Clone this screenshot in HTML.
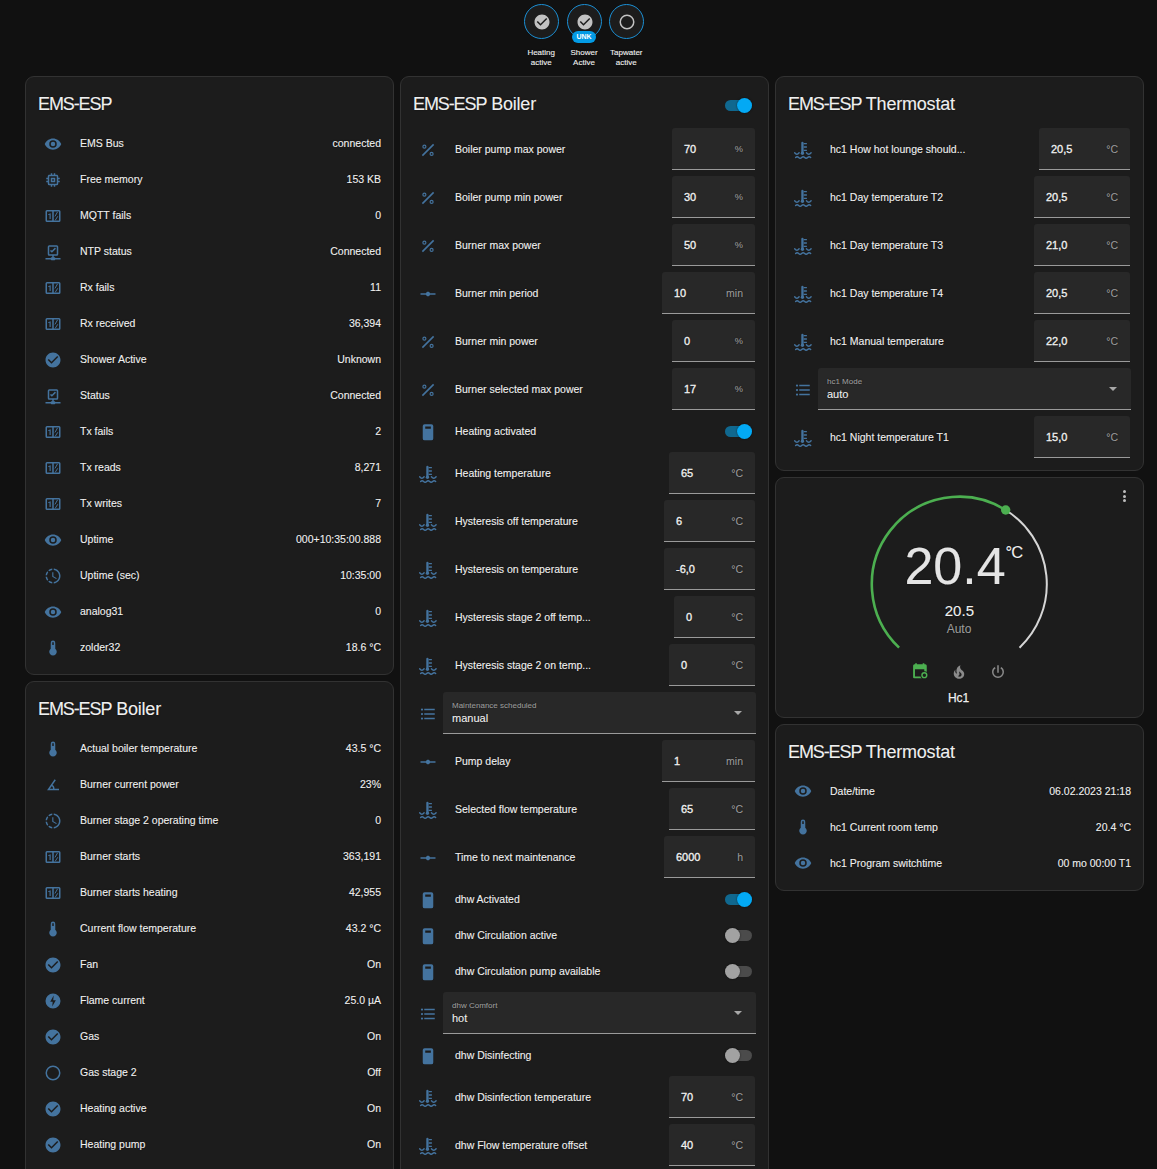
<!DOCTYPE html>
<html><head><meta charset="utf-8"><title>EMS-ESP</title><style>
html,body{margin:0;padding:0;}
body{width:1157px;height:1169px;overflow:hidden;position:relative;background:#111111;font-family:"Liberation Sans",sans-serif;}
.card{position:absolute;box-sizing:border-box;background:#1c1c1c;border:1px solid #323232;border-radius:9px;}
.ic{position:absolute;display:block;}
.t{position:absolute;white-space:nowrap;-webkit-text-stroke:0.12px currentColor;text-shadow:0 0 1.2px rgba(0,0,0,0.9);}
.tf{position:absolute;box-sizing:border-box;background:#282828;border-radius:3px 3px 0 0;border-bottom:1px solid #9a9a9a;}
.trk{position:absolute;width:27px;height:11px;border-radius:6px;}
.knob{position:absolute;width:15px;height:15px;border-radius:50%;box-shadow:0 0 2px rgba(0,0,0,0.6);}
.badge{position:absolute;width:35px;height:35px;box-sizing:border-box;border-radius:50%;border:1.75px solid #1b8fd4;background:#1c1c1c;}
.unk{position:absolute;width:24px;height:12px;border-radius:6px;background:#039be5;color:#fff;font-size:7px;font-weight:bold;line-height:12px;text-align:center;}
.arrow{position:absolute;width:0;height:0;border-left:4px solid transparent;border-right:4px solid transparent;border-top:4px solid #a8a8a8;}
.dot{position:absolute;width:3px;height:3px;border-radius:50%;background:#bdbdbd;}
</style></head><body>
<div class="badge" style="left:523.7px;top:3.9px"></div>
<svg class="ic" style="left:532.7px;top:13.2px;width:18px;height:18px;color:#c2c2c2;fill:#c2c2c2;" viewBox="0 0 24 24"><path d="M12 2C6.5 2 2 6.5 2 12S6.5 22 12 22 22 17.5 22 12 17.5 2 12 2M10 17L5 12L6.41 10.59L10 14.17L17.59 6.58L19 8L10 17Z"/></svg>
<div class="t" style="left:391.20000000000005px;width:300px;top:47.9px;font-size:8px;line-height:10px;color:#f0f0f0;text-align:center;">Heating</div>
<div class="t" style="left:391.20000000000005px;width:300px;top:57.7px;font-size:8px;line-height:10px;color:#f0f0f0;text-align:center;">active</div>
<div class="badge" style="left:566.5px;top:3.9px"></div>
<svg class="ic" style="left:575.5px;top:13.2px;width:18px;height:18px;color:#c2c2c2;fill:#c2c2c2;" viewBox="0 0 24 24"><path d="M12 2C6.5 2 2 6.5 2 12S6.5 22 12 22 22 17.5 22 12 17.5 2 12 2M10 17L5 12L6.41 10.59L10 14.17L17.59 6.58L19 8L10 17Z"/></svg>
<div class="unk" style="left:572px;top:31px">UNK</div>
<div class="t" style="left:434px;width:300px;top:47.9px;font-size:8px;line-height:10px;color:#f0f0f0;text-align:center;">Shower</div>
<div class="t" style="left:434px;width:300px;top:57.7px;font-size:8px;line-height:10px;color:#f0f0f0;text-align:center;">Active</div>
<div class="badge" style="left:608.8px;top:3.9px"></div>
<svg class="ic" style="left:617.8px;top:13.2px;width:18px;height:18px;color:#c2c2c2;fill:#c2c2c2;" viewBox="0 0 24 24"><path d="M12,20A8,8 0 0,1 4,12A8,8 0 0,1 12,4A8,8 0 0,1 20,12A8,8 0 0,1 12,20M12,2A10,10 0 0,0 2,12A10,10 0 0,0 12,22A10,10 0 0,0 22,12A10,10 0 0,0 12,2Z"/></svg>
<div class="t" style="left:476.29999999999995px;width:300px;top:47.9px;font-size:8px;line-height:10px;color:#f0f0f0;text-align:center;">Tapwater</div>
<div class="t" style="left:476.29999999999995px;width:300px;top:57.7px;font-size:8px;line-height:10px;color:#f0f0f0;text-align:center;">active</div>
<div class="card" style="left:25px;top:76px;width:369px;height:599px"></div>
<div class="t" style="left:38px;top:91.6px;font-size:18px;line-height:24px;color:#f0f0f0;"><span style="letter-spacing:-1.1px">EMS-ESP</span></div>
<svg class="ic" style="left:44.0px;top:135.0px;width:18px;height:18px;color:#44739e;fill:#44739e;" viewBox="0 0 24 24"><path d="M12,9A3,3 0 0,0 9,12A3,3 0 0,0 12,15A3,3 0 0,0 15,12A3,3 0 0,0 12,9M12,17A5,5 0 0,1 7,12A5,5 0 0,1 12,7A5,5 0 0,1 17,12A5,5 0 0,1 12,17M12,4.5C7,4.5 2.73,7.61 1,12C2.73,16.39 7,19.5 12,19.5C17,19.5 21.27,16.39 23,12C21.27,7.61 17,4.5 12,4.5Z"/></svg>
<div class="t" style="left:80px;top:133.0px;font-size:10.5px;line-height:20px;color:#f0f0f0;">EMS Bus</div>
<div class="t" style="right:776px;top:133.0px;font-size:10.5px;line-height:20px;color:#f0f0f0;text-align:right;">connected</div>
<svg class="ic" style="left:44.0px;top:171.0px;width:18px;height:18px;color:#44739e;fill:#44739e;" viewBox="0 0 24 24"><path d="M17,17H7V7H17M21,11V9H19V7C19,5.89 18.1,5 17,5H15V3H13V5H11V3H9V5H7C5.89,5 5,5.89 5,7V9H3V11H5V13H3V15H5V17A2,2 0 0,0 7,19H9V21H11V19H13V21H15V19H17A2,2 0 0,0 19,17V15H21V13H19V11M13,13H11V11H13M15,9H9V15H15V9Z"/></svg>
<div class="t" style="left:80px;top:169.0px;font-size:10.5px;line-height:20px;color:#f0f0f0;">Free memory</div>
<div class="t" style="right:776px;top:169.0px;font-size:10.5px;line-height:20px;color:#f0f0f0;text-align:right;">153 KB</div>
<svg class="ic" style="left:44.0px;top:207.0px;width:18px;height:18px;color:#44739e;fill:#44739e;" viewBox="0 0 24 24"><path fill-rule="evenodd" d="M4,4H20A2,2 0 0 1 22,6V18A2,2 0 0 1 20,20H4A2,2 0 0 1 2,18V6A2,2 0 0 1 4,4ZM4,6V18H11V6ZM13,6V18H20V6Z"/><path d="M8.9,16H7.4V10.2L5.6,10.8V9.5L8.8,8.4H8.9Z"/><path d="M14.6,12.6L18,6.6M14.9,17.8L18.3,12.4" fill="none" stroke="currentColor" stroke-width="1.3"/></svg>
<div class="t" style="left:80px;top:205.0px;font-size:10.5px;line-height:20px;color:#f0f0f0;">MQTT fails</div>
<div class="t" style="right:776px;top:205.0px;font-size:10.5px;line-height:20px;color:#f0f0f0;text-align:right;">0</div>
<svg class="ic" style="left:44.0px;top:243.0px;width:18px;height:18px;color:#44739e;fill:#44739e;" viewBox="0 0 24 24"><path d="M15,20A1,1 0 0,0 14,19H13V17H17A2,2 0 0,0 19,15V5A2,2 0 0,0 17,3H7A2,2 0 0,0 5,5V15A2,2 0 0,0 7,17H11V19H10A1,1 0 0,0 9,20H2V22H9A1,1 0 0,0 10,23H14A1,1 0 0,0 15,22H22V20H15M7,15V5H17V15H7M10.5,13L8,10.5L9.41,9.09L10.5,10.17L14.59,6.09L16,7.5L10.5,13Z"/></svg>
<div class="t" style="left:80px;top:241.0px;font-size:10.5px;line-height:20px;color:#f0f0f0;">NTP status</div>
<div class="t" style="right:776px;top:241.0px;font-size:10.5px;line-height:20px;color:#f0f0f0;text-align:right;">Connected</div>
<svg class="ic" style="left:44.0px;top:279.0px;width:18px;height:18px;color:#44739e;fill:#44739e;" viewBox="0 0 24 24"><path fill-rule="evenodd" d="M4,4H20A2,2 0 0 1 22,6V18A2,2 0 0 1 20,20H4A2,2 0 0 1 2,18V6A2,2 0 0 1 4,4ZM4,6V18H11V6ZM13,6V18H20V6Z"/><path d="M8.9,16H7.4V10.2L5.6,10.8V9.5L8.8,8.4H8.9Z"/><path d="M14.6,12.6L18,6.6M14.9,17.8L18.3,12.4" fill="none" stroke="currentColor" stroke-width="1.3"/></svg>
<div class="t" style="left:80px;top:277.0px;font-size:10.5px;line-height:20px;color:#f0f0f0;">Rx fails</div>
<div class="t" style="right:776px;top:277.0px;font-size:10.5px;line-height:20px;color:#f0f0f0;text-align:right;">11</div>
<svg class="ic" style="left:44.0px;top:315.0px;width:18px;height:18px;color:#44739e;fill:#44739e;" viewBox="0 0 24 24"><path fill-rule="evenodd" d="M4,4H20A2,2 0 0 1 22,6V18A2,2 0 0 1 20,20H4A2,2 0 0 1 2,18V6A2,2 0 0 1 4,4ZM4,6V18H11V6ZM13,6V18H20V6Z"/><path d="M8.9,16H7.4V10.2L5.6,10.8V9.5L8.8,8.4H8.9Z"/><path d="M14.6,12.6L18,6.6M14.9,17.8L18.3,12.4" fill="none" stroke="currentColor" stroke-width="1.3"/></svg>
<div class="t" style="left:80px;top:313.0px;font-size:10.5px;line-height:20px;color:#f0f0f0;">Rx received</div>
<div class="t" style="right:776px;top:313.0px;font-size:10.5px;line-height:20px;color:#f0f0f0;text-align:right;">36,394</div>
<svg class="ic" style="left:44.0px;top:351.0px;width:18px;height:18px;color:#44739e;fill:#44739e;" viewBox="0 0 24 24"><path d="M12 2C6.5 2 2 6.5 2 12S6.5 22 12 22 22 17.5 22 12 17.5 2 12 2M10 17L5 12L6.41 10.59L10 14.17L17.59 6.58L19 8L10 17Z"/></svg>
<div class="t" style="left:80px;top:349.0px;font-size:10.5px;line-height:20px;color:#f0f0f0;">Shower Active</div>
<div class="t" style="right:776px;top:349.0px;font-size:10.5px;line-height:20px;color:#f0f0f0;text-align:right;">Unknown</div>
<svg class="ic" style="left:44.0px;top:387.0px;width:18px;height:18px;color:#44739e;fill:#44739e;" viewBox="0 0 24 24"><path d="M15,20A1,1 0 0,0 14,19H13V17H17A2,2 0 0,0 19,15V5A2,2 0 0,0 17,3H7A2,2 0 0,0 5,5V15A2,2 0 0,0 7,17H11V19H10A1,1 0 0,0 9,20H2V22H9A1,1 0 0,0 10,23H14A1,1 0 0,0 15,22H22V20H15M7,15V5H17V15H7M10.5,13L8,10.5L9.41,9.09L10.5,10.17L14.59,6.09L16,7.5L10.5,13Z"/></svg>
<div class="t" style="left:80px;top:385.0px;font-size:10.5px;line-height:20px;color:#f0f0f0;">Status</div>
<div class="t" style="right:776px;top:385.0px;font-size:10.5px;line-height:20px;color:#f0f0f0;text-align:right;">Connected</div>
<svg class="ic" style="left:44.0px;top:423.0px;width:18px;height:18px;color:#44739e;fill:#44739e;" viewBox="0 0 24 24"><path fill-rule="evenodd" d="M4,4H20A2,2 0 0 1 22,6V18A2,2 0 0 1 20,20H4A2,2 0 0 1 2,18V6A2,2 0 0 1 4,4ZM4,6V18H11V6ZM13,6V18H20V6Z"/><path d="M8.9,16H7.4V10.2L5.6,10.8V9.5L8.8,8.4H8.9Z"/><path d="M14.6,12.6L18,6.6M14.9,17.8L18.3,12.4" fill="none" stroke="currentColor" stroke-width="1.3"/></svg>
<div class="t" style="left:80px;top:421.0px;font-size:10.5px;line-height:20px;color:#f0f0f0;">Tx fails</div>
<div class="t" style="right:776px;top:421.0px;font-size:10.5px;line-height:20px;color:#f0f0f0;text-align:right;">2</div>
<svg class="ic" style="left:44.0px;top:459.0px;width:18px;height:18px;color:#44739e;fill:#44739e;" viewBox="0 0 24 24"><path fill-rule="evenodd" d="M4,4H20A2,2 0 0 1 22,6V18A2,2 0 0 1 20,20H4A2,2 0 0 1 2,18V6A2,2 0 0 1 4,4ZM4,6V18H11V6ZM13,6V18H20V6Z"/><path d="M8.9,16H7.4V10.2L5.6,10.8V9.5L8.8,8.4H8.9Z"/><path d="M14.6,12.6L18,6.6M14.9,17.8L18.3,12.4" fill="none" stroke="currentColor" stroke-width="1.3"/></svg>
<div class="t" style="left:80px;top:457.0px;font-size:10.5px;line-height:20px;color:#f0f0f0;">Tx reads</div>
<div class="t" style="right:776px;top:457.0px;font-size:10.5px;line-height:20px;color:#f0f0f0;text-align:right;">8,271</div>
<svg class="ic" style="left:44.0px;top:495.0px;width:18px;height:18px;color:#44739e;fill:#44739e;" viewBox="0 0 24 24"><path fill-rule="evenodd" d="M4,4H20A2,2 0 0 1 22,6V18A2,2 0 0 1 20,20H4A2,2 0 0 1 2,18V6A2,2 0 0 1 4,4ZM4,6V18H11V6ZM13,6V18H20V6Z"/><path d="M8.9,16H7.4V10.2L5.6,10.8V9.5L8.8,8.4H8.9Z"/><path d="M14.6,12.6L18,6.6M14.9,17.8L18.3,12.4" fill="none" stroke="currentColor" stroke-width="1.3"/></svg>
<div class="t" style="left:80px;top:493.0px;font-size:10.5px;line-height:20px;color:#f0f0f0;">Tx writes</div>
<div class="t" style="right:776px;top:493.0px;font-size:10.5px;line-height:20px;color:#f0f0f0;text-align:right;">7</div>
<svg class="ic" style="left:44.0px;top:531.0px;width:18px;height:18px;color:#44739e;fill:#44739e;" viewBox="0 0 24 24"><path d="M12,9A3,3 0 0,0 9,12A3,3 0 0,0 12,15A3,3 0 0,0 15,12A3,3 0 0,0 12,9M12,17A5,5 0 0,1 7,12A5,5 0 0,1 12,7A5,5 0 0,1 17,12A5,5 0 0,1 12,17M12,4.5C7,4.5 2.73,7.61 1,12C2.73,16.39 7,19.5 12,19.5C17,19.5 21.27,16.39 23,12C21.27,7.61 17,4.5 12,4.5Z"/></svg>
<div class="t" style="left:80px;top:529.0px;font-size:10.5px;line-height:20px;color:#f0f0f0;">Uptime</div>
<div class="t" style="right:776px;top:529.0px;font-size:10.5px;line-height:20px;color:#f0f0f0;text-align:right;">000+10:35:00.888</div>
<svg class="ic" style="left:44.0px;top:567.0px;width:18px;height:18px;color:#44739e;fill:#44739e;" viewBox="0 0 24 24"><path d="M13,2.03V2.05L13,4.05C17.39,4.59 20.5,8.58 19.96,12.97C19.5,16.61 16.64,19.5 13,19.93V21.93C18.5,21.38 22.5,16.5 21.95,11C21.5,6.25 17.73,2.5 13,2.03M11,2.06C9.05,2.25 7.19,3 5.67,4.26L7.1,5.74C8.22,4.84 9.57,4.26 11,4.06V2.06M4.26,5.67C3,7.19 2.25,9.04 2.05,11H4.05C4.24,9.58 4.8,8.23 5.69,7.1L4.26,5.67M2.06,13C2.26,14.96 3.03,16.81 4.27,18.33L5.69,16.9C4.81,15.77 4.24,14.42 4.06,13H2.06M7.1,18.37L5.67,19.74C7.18,21 9.04,21.79 11,22V20C9.58,19.82 8.23,19.25 7.1,18.37M12.5,7V12.25L17,14.92L16.25,16.15L11,13V7H12.5Z"/></svg>
<div class="t" style="left:80px;top:565.0px;font-size:10.5px;line-height:20px;color:#f0f0f0;">Uptime (sec)</div>
<div class="t" style="right:776px;top:565.0px;font-size:10.5px;line-height:20px;color:#f0f0f0;text-align:right;">10:35:00</div>
<svg class="ic" style="left:44.0px;top:603.0px;width:18px;height:18px;color:#44739e;fill:#44739e;" viewBox="0 0 24 24"><path d="M12,9A3,3 0 0,0 9,12A3,3 0 0,0 12,15A3,3 0 0,0 15,12A3,3 0 0,0 12,9M12,17A5,5 0 0,1 7,12A5,5 0 0,1 12,7A5,5 0 0,1 17,12A5,5 0 0,1 12,17M12,4.5C7,4.5 2.73,7.61 1,12C2.73,16.39 7,19.5 12,19.5C17,19.5 21.27,16.39 23,12C21.27,7.61 17,4.5 12,4.5Z"/></svg>
<div class="t" style="left:80px;top:601.0px;font-size:10.5px;line-height:20px;color:#f0f0f0;">analog31</div>
<div class="t" style="right:776px;top:601.0px;font-size:10.5px;line-height:20px;color:#f0f0f0;text-align:right;">0</div>
<svg class="ic" style="left:44.0px;top:639.0px;width:18px;height:18px;color:#44739e;fill:#44739e;" viewBox="0 0 24 24"><path fill-rule="evenodd" d="M15 13V5A3 3 0 0 0 9 5V13A5 5 0 1 0 15 13M12 4A1 1 0 0 1 13 5V8H11V5A1 1 0 0 1 12 4Z"/></svg>
<div class="t" style="left:80px;top:637.0px;font-size:10.5px;line-height:20px;color:#f0f0f0;">zolder32</div>
<div class="t" style="right:776px;top:637.0px;font-size:10.5px;line-height:20px;color:#f0f0f0;text-align:right;">18.6 °C</div>
<div class="card" style="left:25px;top:681px;width:369px;height:600px"></div>
<div class="t" style="left:38px;top:697.2px;font-size:18px;line-height:24px;color:#f0f0f0;"><span style="letter-spacing:-1.1px">EMS-ESP</span><span style="letter-spacing:-0.2px"> Boiler</span></div>
<svg class="ic" style="left:44.0px;top:740.0px;width:18px;height:18px;color:#44739e;fill:#44739e;" viewBox="0 0 24 24"><path fill-rule="evenodd" d="M15 13V5A3 3 0 0 0 9 5V13A5 5 0 1 0 15 13M12 4A1 1 0 0 1 13 5V8H11V5A1 1 0 0 1 12 4Z"/></svg>
<div class="t" style="left:80px;top:738.0px;font-size:10.5px;line-height:20px;color:#f0f0f0;">Actual boiler temperature</div>
<div class="t" style="right:776px;top:738.0px;font-size:10.5px;line-height:20px;color:#f0f0f0;text-align:right;">43.5 °C</div>
<svg class="ic" style="left:44.0px;top:776.0px;width:18px;height:18px;color:#44739e;fill:#44739e;" viewBox="0 0 24 24"><path d="M20,19H4.09L14.18,4.43L15.82,5.57L11.28,12.13C12.89,12.96 14,14.62 14,16.54C14,16.7 14,16.85 13.97,17H20V19M7.91,17H11.96C12,16.85 12,16.7 12,16.54C12,15.28 11.24,14.22 10.14,13.78L7.91,17Z"/></svg>
<div class="t" style="left:80px;top:774.0px;font-size:10.5px;line-height:20px;color:#f0f0f0;">Burner current power</div>
<div class="t" style="right:776px;top:774.0px;font-size:10.5px;line-height:20px;color:#f0f0f0;text-align:right;">23%</div>
<svg class="ic" style="left:44.0px;top:812.0px;width:18px;height:18px;color:#44739e;fill:#44739e;" viewBox="0 0 24 24"><path d="M13,2.03V2.05L13,4.05C17.39,4.59 20.5,8.58 19.96,12.97C19.5,16.61 16.64,19.5 13,19.93V21.93C18.5,21.38 22.5,16.5 21.95,11C21.5,6.25 17.73,2.5 13,2.03M11,2.06C9.05,2.25 7.19,3 5.67,4.26L7.1,5.74C8.22,4.84 9.57,4.26 11,4.06V2.06M4.26,5.67C3,7.19 2.25,9.04 2.05,11H4.05C4.24,9.58 4.8,8.23 5.69,7.1L4.26,5.67M2.06,13C2.26,14.96 3.03,16.81 4.27,18.33L5.69,16.9C4.81,15.77 4.24,14.42 4.06,13H2.06M7.1,18.37L5.67,19.74C7.18,21 9.04,21.79 11,22V20C9.58,19.82 8.23,19.25 7.1,18.37M12.5,7V12.25L17,14.92L16.25,16.15L11,13V7H12.5Z"/></svg>
<div class="t" style="left:80px;top:810.0px;font-size:10.5px;line-height:20px;color:#f0f0f0;">Burner stage 2 operating time</div>
<div class="t" style="right:776px;top:810.0px;font-size:10.5px;line-height:20px;color:#f0f0f0;text-align:right;">0</div>
<svg class="ic" style="left:44.0px;top:848.0px;width:18px;height:18px;color:#44739e;fill:#44739e;" viewBox="0 0 24 24"><path fill-rule="evenodd" d="M4,4H20A2,2 0 0 1 22,6V18A2,2 0 0 1 20,20H4A2,2 0 0 1 2,18V6A2,2 0 0 1 4,4ZM4,6V18H11V6ZM13,6V18H20V6Z"/><path d="M8.9,16H7.4V10.2L5.6,10.8V9.5L8.8,8.4H8.9Z"/><path d="M14.6,12.6L18,6.6M14.9,17.8L18.3,12.4" fill="none" stroke="currentColor" stroke-width="1.3"/></svg>
<div class="t" style="left:80px;top:846.0px;font-size:10.5px;line-height:20px;color:#f0f0f0;">Burner starts</div>
<div class="t" style="right:776px;top:846.0px;font-size:10.5px;line-height:20px;color:#f0f0f0;text-align:right;">363,191</div>
<svg class="ic" style="left:44.0px;top:884.0px;width:18px;height:18px;color:#44739e;fill:#44739e;" viewBox="0 0 24 24"><path fill-rule="evenodd" d="M4,4H20A2,2 0 0 1 22,6V18A2,2 0 0 1 20,20H4A2,2 0 0 1 2,18V6A2,2 0 0 1 4,4ZM4,6V18H11V6ZM13,6V18H20V6Z"/><path d="M8.9,16H7.4V10.2L5.6,10.8V9.5L8.8,8.4H8.9Z"/><path d="M14.6,12.6L18,6.6M14.9,17.8L18.3,12.4" fill="none" stroke="currentColor" stroke-width="1.3"/></svg>
<div class="t" style="left:80px;top:882.0px;font-size:10.5px;line-height:20px;color:#f0f0f0;">Burner starts heating</div>
<div class="t" style="right:776px;top:882.0px;font-size:10.5px;line-height:20px;color:#f0f0f0;text-align:right;">42,955</div>
<svg class="ic" style="left:44.0px;top:920.0px;width:18px;height:18px;color:#44739e;fill:#44739e;" viewBox="0 0 24 24"><path fill-rule="evenodd" d="M15 13V5A3 3 0 0 0 9 5V13A5 5 0 1 0 15 13M12 4A1 1 0 0 1 13 5V8H11V5A1 1 0 0 1 12 4Z"/></svg>
<div class="t" style="left:80px;top:918.0px;font-size:10.5px;line-height:20px;color:#f0f0f0;">Current flow temperature</div>
<div class="t" style="right:776px;top:918.0px;font-size:10.5px;line-height:20px;color:#f0f0f0;text-align:right;">43.2 °C</div>
<svg class="ic" style="left:44.0px;top:956.0px;width:18px;height:18px;color:#44739e;fill:#44739e;" viewBox="0 0 24 24"><path d="M12 2C6.5 2 2 6.5 2 12S6.5 22 12 22 22 17.5 22 12 17.5 2 12 2M10 17L5 12L6.41 10.59L10 14.17L17.59 6.58L19 8L10 17Z"/></svg>
<div class="t" style="left:80px;top:954.0px;font-size:10.5px;line-height:20px;color:#f0f0f0;">Fan</div>
<div class="t" style="right:776px;top:954.0px;font-size:10.5px;line-height:20px;color:#f0f0f0;text-align:right;">On</div>
<svg class="ic" style="left:44.0px;top:992.0px;width:18px;height:18px;color:#44739e;fill:#44739e;" viewBox="0 0 24 24"><path fill-rule="evenodd" d="M12,2A10,10 0 0 0 2,12A10,10 0 0 0 12,22A10,10 0 0 0 22,12A10,10 0 0 0 12,2ZM12.9,4.6L8.3,12.9H11.6L11,19.4L15.8,11H12.3Z"/></svg>
<div class="t" style="left:80px;top:990.0px;font-size:10.5px;line-height:20px;color:#f0f0f0;">Flame current</div>
<div class="t" style="right:776px;top:990.0px;font-size:10.5px;line-height:20px;color:#f0f0f0;text-align:right;">25.0 µA</div>
<svg class="ic" style="left:44.0px;top:1028.0px;width:18px;height:18px;color:#44739e;fill:#44739e;" viewBox="0 0 24 24"><path d="M12 2C6.5 2 2 6.5 2 12S6.5 22 12 22 22 17.5 22 12 17.5 2 12 2M10 17L5 12L6.41 10.59L10 14.17L17.59 6.58L19 8L10 17Z"/></svg>
<div class="t" style="left:80px;top:1026.0px;font-size:10.5px;line-height:20px;color:#f0f0f0;">Gas</div>
<div class="t" style="right:776px;top:1026.0px;font-size:10.5px;line-height:20px;color:#f0f0f0;text-align:right;">On</div>
<svg class="ic" style="left:44.0px;top:1064.0px;width:18px;height:18px;color:#44739e;fill:#44739e;" viewBox="0 0 24 24"><path d="M12,20A8,8 0 0,1 4,12A8,8 0 0,1 12,4A8,8 0 0,1 20,12A8,8 0 0,1 12,20M12,2A10,10 0 0,0 2,12A10,10 0 0,0 12,22A10,10 0 0,0 22,12A10,10 0 0,0 12,2Z"/></svg>
<div class="t" style="left:80px;top:1062.0px;font-size:10.5px;line-height:20px;color:#f0f0f0;">Gas stage 2</div>
<div class="t" style="right:776px;top:1062.0px;font-size:10.5px;line-height:20px;color:#f0f0f0;text-align:right;">Off</div>
<svg class="ic" style="left:44.0px;top:1100.0px;width:18px;height:18px;color:#44739e;fill:#44739e;" viewBox="0 0 24 24"><path d="M12 2C6.5 2 2 6.5 2 12S6.5 22 12 22 22 17.5 22 12 17.5 2 12 2M10 17L5 12L6.41 10.59L10 14.17L17.59 6.58L19 8L10 17Z"/></svg>
<div class="t" style="left:80px;top:1098.0px;font-size:10.5px;line-height:20px;color:#f0f0f0;">Heating active</div>
<div class="t" style="right:776px;top:1098.0px;font-size:10.5px;line-height:20px;color:#f0f0f0;text-align:right;">On</div>
<svg class="ic" style="left:44.0px;top:1136.0px;width:18px;height:18px;color:#44739e;fill:#44739e;" viewBox="0 0 24 24"><path d="M12 2C6.5 2 2 6.5 2 12S6.5 22 12 22 22 17.5 22 12 17.5 2 12 2M10 17L5 12L6.41 10.59L10 14.17L17.59 6.58L19 8L10 17Z"/></svg>
<div class="t" style="left:80px;top:1134.0px;font-size:10.5px;line-height:20px;color:#f0f0f0;">Heating pump</div>
<div class="t" style="right:776px;top:1134.0px;font-size:10.5px;line-height:20px;color:#f0f0f0;text-align:right;">On</div>
<div class="card" style="left:400px;top:76px;width:369px;height:1200px"></div>
<div class="t" style="left:413px;top:91.6px;font-size:18px;line-height:24px;color:#f0f0f0;"><span style="letter-spacing:-1.1px">EMS-ESP</span><span style="letter-spacing:-0.2px"> Boiler</span></div>
<div class="trk" style="left:725px;top:99.8px;background:#10688f"></div><div class="knob" style="left:737px;top:97.8px;background:#03a9f4"></div>
<svg class="ic" style="left:419.0px;top:140.8px;width:18px;height:18px;color:#44739e;fill:#44739e;" viewBox="0 0 24 24"><g fill="none" stroke="currentColor"><path d="M4.5,19.5L19.5,4.5" stroke-width="2.1"/><circle cx="7.2" cy="7.6" r="2" stroke-width="1.6"/><circle cx="16.8" cy="17.2" r="2" stroke-width="1.6"/></g></svg>
<div class="t" style="left:455px;top:138.8px;font-size:10.5px;line-height:20px;color:#f0f0f0;">Boiler pump max power</div>
<div class="tf" style="left:672px;top:128px;width:83px;height:42px"></div>
<div class="t" style="left:684px;top:139.0px;font-size:11px;line-height:20px;color:#f0f0f0;-webkit-text-stroke:0.35px currentColor;">70</div>
<div class="t" style="right:414px;top:139.0px;font-size:9.2px;line-height:20px;color:#9b9b9b;text-align:right;">%</div>
<svg class="ic" style="left:419.0px;top:188.8px;width:18px;height:18px;color:#44739e;fill:#44739e;" viewBox="0 0 24 24"><g fill="none" stroke="currentColor"><path d="M4.5,19.5L19.5,4.5" stroke-width="2.1"/><circle cx="7.2" cy="7.6" r="2" stroke-width="1.6"/><circle cx="16.8" cy="17.2" r="2" stroke-width="1.6"/></g></svg>
<div class="t" style="left:455px;top:186.8px;font-size:10.5px;line-height:20px;color:#f0f0f0;">Boiler pump min power</div>
<div class="tf" style="left:672px;top:176px;width:83px;height:42px"></div>
<div class="t" style="left:684px;top:187.0px;font-size:11px;line-height:20px;color:#f0f0f0;-webkit-text-stroke:0.35px currentColor;">30</div>
<div class="t" style="right:414px;top:187.0px;font-size:9.2px;line-height:20px;color:#9b9b9b;text-align:right;">%</div>
<svg class="ic" style="left:419.0px;top:236.8px;width:18px;height:18px;color:#44739e;fill:#44739e;" viewBox="0 0 24 24"><g fill="none" stroke="currentColor"><path d="M4.5,19.5L19.5,4.5" stroke-width="2.1"/><circle cx="7.2" cy="7.6" r="2" stroke-width="1.6"/><circle cx="16.8" cy="17.2" r="2" stroke-width="1.6"/></g></svg>
<div class="t" style="left:455px;top:234.8px;font-size:10.5px;line-height:20px;color:#f0f0f0;">Burner max power</div>
<div class="tf" style="left:672px;top:224px;width:83px;height:42px"></div>
<div class="t" style="left:684px;top:235.0px;font-size:11px;line-height:20px;color:#f0f0f0;-webkit-text-stroke:0.35px currentColor;">50</div>
<div class="t" style="right:414px;top:235.0px;font-size:9.2px;line-height:20px;color:#9b9b9b;text-align:right;">%</div>
<svg class="ic" style="left:419.0px;top:284.8px;width:18px;height:18px;color:#44739e;fill:#44739e;" viewBox="0 0 24 24"><path d="M2 11H9.17C9.58 9.83 10.69 9 12 9S14.42 9.83 14.83 11H22V13H14.83C14.42 14.17 13.31 15 12 15S9.58 14.17 9.17 13H2V11Z"/></svg>
<div class="t" style="left:455px;top:282.8px;font-size:10.5px;line-height:20px;color:#f0f0f0;">Burner min period</div>
<div class="tf" style="left:662px;top:272px;width:93px;height:42px"></div>
<div class="t" style="left:674px;top:283.0px;font-size:11px;line-height:20px;color:#f0f0f0;-webkit-text-stroke:0.35px currentColor;">10</div>
<div class="t" style="right:414px;top:283.0px;font-size:10.5px;line-height:20px;color:#9b9b9b;text-align:right;">min</div>
<svg class="ic" style="left:419.0px;top:332.8px;width:18px;height:18px;color:#44739e;fill:#44739e;" viewBox="0 0 24 24"><g fill="none" stroke="currentColor"><path d="M4.5,19.5L19.5,4.5" stroke-width="2.1"/><circle cx="7.2" cy="7.6" r="2" stroke-width="1.6"/><circle cx="16.8" cy="17.2" r="2" stroke-width="1.6"/></g></svg>
<div class="t" style="left:455px;top:330.8px;font-size:10.5px;line-height:20px;color:#f0f0f0;">Burner min power</div>
<div class="tf" style="left:672px;top:320px;width:83px;height:42px"></div>
<div class="t" style="left:684px;top:331.0px;font-size:11px;line-height:20px;color:#f0f0f0;-webkit-text-stroke:0.35px currentColor;">0</div>
<div class="t" style="right:414px;top:331.0px;font-size:9.2px;line-height:20px;color:#9b9b9b;text-align:right;">%</div>
<svg class="ic" style="left:419.0px;top:380.8px;width:18px;height:18px;color:#44739e;fill:#44739e;" viewBox="0 0 24 24"><g fill="none" stroke="currentColor"><path d="M4.5,19.5L19.5,4.5" stroke-width="2.1"/><circle cx="7.2" cy="7.6" r="2" stroke-width="1.6"/><circle cx="16.8" cy="17.2" r="2" stroke-width="1.6"/></g></svg>
<div class="t" style="left:455px;top:378.8px;font-size:10.5px;line-height:20px;color:#f0f0f0;">Burner selected max power</div>
<div class="tf" style="left:672px;top:368px;width:83px;height:42px"></div>
<div class="t" style="left:684px;top:379.0px;font-size:11px;line-height:20px;color:#f0f0f0;-webkit-text-stroke:0.35px currentColor;">17</div>
<div class="t" style="right:414px;top:379.0px;font-size:9.2px;line-height:20px;color:#9b9b9b;text-align:right;">%</div>
<svg class="ic" style="left:419.0px;top:422.8px;width:18px;height:18px;color:#44739e;fill:#44739e;" viewBox="0 0 24 24"><path fill-rule="evenodd" d="M7.5,1.5H16.5A2.5,2.5 0 0 1 19,4V20.5A2.5,2.5 0 0 1 16.5,23H7.5A2.5,2.5 0 0 1 5,20.5V4A2.5,2.5 0 0 1 7.5,1.5ZM8.3,4.5V7.5H15.8V4.5Z"/></svg>
<div class="t" style="left:455px;top:420.8px;font-size:10.5px;line-height:20px;color:#f0f0f0;">Heating activated</div>
<div class="trk" style="left:725px;top:425.8px;background:#10688f"></div><div class="knob" style="left:737px;top:423.8px;background:#03a9f4"></div>
<svg class="ic" style="left:419.0px;top:464.8px;width:18px;height:18px;color:#44739e;fill:#44739e;" viewBox="0 0 24 24"><g fill="none" stroke="currentColor" stroke-linecap="round"><path d="M11.25,2.7V15.5" stroke-width="3.1"/><path d="M12.8,3.5H17.2M12.8,8H17.2M12.8,12.6H17.2" stroke-width="1.7" stroke-linecap="butt"/><path d="M0.9,15.7Q3.8,19.6 6.8,15.7M16.6,15.7Q19.6,19.6 22.8,15.7" stroke-width="1.9"/><path d="M2.2,22Q4.2,20 6.2,22T10.2,22T14.2,22T18.2,22T22.2,22" stroke-width="1.9"/></g><circle cx="11.25" cy="16.3" r="2.2"/></svg>
<div class="t" style="left:455px;top:462.8px;font-size:10.5px;line-height:20px;color:#f0f0f0;">Heating temperature</div>
<div class="tf" style="left:669px;top:452px;width:86px;height:42px"></div>
<div class="t" style="left:681px;top:463.0px;font-size:11px;line-height:20px;color:#f0f0f0;-webkit-text-stroke:0.35px currentColor;">65</div>
<div class="t" style="right:414px;top:463.0px;font-size:10.5px;line-height:20px;color:#9b9b9b;text-align:right;">°C</div>
<svg class="ic" style="left:419.0px;top:512.8px;width:18px;height:18px;color:#44739e;fill:#44739e;" viewBox="0 0 24 24"><g fill="none" stroke="currentColor" stroke-linecap="round"><path d="M11.25,2.7V15.5" stroke-width="3.1"/><path d="M12.8,3.5H17.2M12.8,8H17.2M12.8,12.6H17.2" stroke-width="1.7" stroke-linecap="butt"/><path d="M0.9,15.7Q3.8,19.6 6.8,15.7M16.6,15.7Q19.6,19.6 22.8,15.7" stroke-width="1.9"/><path d="M2.2,22Q4.2,20 6.2,22T10.2,22T14.2,22T18.2,22T22.2,22" stroke-width="1.9"/></g><circle cx="11.25" cy="16.3" r="2.2"/></svg>
<div class="t" style="left:455px;top:510.79999999999995px;font-size:10.5px;line-height:20px;color:#f0f0f0;">Hysteresis off temperature</div>
<div class="tf" style="left:664px;top:500px;width:91px;height:42px"></div>
<div class="t" style="left:676px;top:511.0px;font-size:11px;line-height:20px;color:#f0f0f0;-webkit-text-stroke:0.35px currentColor;">6</div>
<div class="t" style="right:414px;top:511.0px;font-size:10.5px;line-height:20px;color:#9b9b9b;text-align:right;">°C</div>
<svg class="ic" style="left:419.0px;top:560.8px;width:18px;height:18px;color:#44739e;fill:#44739e;" viewBox="0 0 24 24"><g fill="none" stroke="currentColor" stroke-linecap="round"><path d="M11.25,2.7V15.5" stroke-width="3.1"/><path d="M12.8,3.5H17.2M12.8,8H17.2M12.8,12.6H17.2" stroke-width="1.7" stroke-linecap="butt"/><path d="M0.9,15.7Q3.8,19.6 6.8,15.7M16.6,15.7Q19.6,19.6 22.8,15.7" stroke-width="1.9"/><path d="M2.2,22Q4.2,20 6.2,22T10.2,22T14.2,22T18.2,22T22.2,22" stroke-width="1.9"/></g><circle cx="11.25" cy="16.3" r="2.2"/></svg>
<div class="t" style="left:455px;top:558.8px;font-size:10.5px;line-height:20px;color:#f0f0f0;">Hysteresis on temperature</div>
<div class="tf" style="left:664px;top:548px;width:91px;height:42px"></div>
<div class="t" style="left:676px;top:559.0px;font-size:11px;line-height:20px;color:#f0f0f0;-webkit-text-stroke:0.35px currentColor;">-6,0</div>
<div class="t" style="right:414px;top:559.0px;font-size:10.5px;line-height:20px;color:#9b9b9b;text-align:right;">°C</div>
<svg class="ic" style="left:419.0px;top:608.8px;width:18px;height:18px;color:#44739e;fill:#44739e;" viewBox="0 0 24 24"><g fill="none" stroke="currentColor" stroke-linecap="round"><path d="M11.25,2.7V15.5" stroke-width="3.1"/><path d="M12.8,3.5H17.2M12.8,8H17.2M12.8,12.6H17.2" stroke-width="1.7" stroke-linecap="butt"/><path d="M0.9,15.7Q3.8,19.6 6.8,15.7M16.6,15.7Q19.6,19.6 22.8,15.7" stroke-width="1.9"/><path d="M2.2,22Q4.2,20 6.2,22T10.2,22T14.2,22T18.2,22T22.2,22" stroke-width="1.9"/></g><circle cx="11.25" cy="16.3" r="2.2"/></svg>
<div class="t" style="left:455px;top:606.8px;font-size:10.5px;line-height:20px;color:#f0f0f0;">Hysteresis stage 2 off temp...</div>
<div class="tf" style="left:674px;top:596px;width:81px;height:42px"></div>
<div class="t" style="left:686px;top:607.0px;font-size:11px;line-height:20px;color:#f0f0f0;-webkit-text-stroke:0.35px currentColor;">0</div>
<div class="t" style="right:414px;top:607.0px;font-size:10.5px;line-height:20px;color:#9b9b9b;text-align:right;">°C</div>
<svg class="ic" style="left:419.0px;top:656.8px;width:18px;height:18px;color:#44739e;fill:#44739e;" viewBox="0 0 24 24"><g fill="none" stroke="currentColor" stroke-linecap="round"><path d="M11.25,2.7V15.5" stroke-width="3.1"/><path d="M12.8,3.5H17.2M12.8,8H17.2M12.8,12.6H17.2" stroke-width="1.7" stroke-linecap="butt"/><path d="M0.9,15.7Q3.8,19.6 6.8,15.7M16.6,15.7Q19.6,19.6 22.8,15.7" stroke-width="1.9"/><path d="M2.2,22Q4.2,20 6.2,22T10.2,22T14.2,22T18.2,22T22.2,22" stroke-width="1.9"/></g><circle cx="11.25" cy="16.3" r="2.2"/></svg>
<div class="t" style="left:455px;top:654.8px;font-size:10.5px;line-height:20px;color:#f0f0f0;">Hysteresis stage 2 on temp...</div>
<div class="tf" style="left:669px;top:644px;width:86px;height:42px"></div>
<div class="t" style="left:681px;top:655.0px;font-size:11px;line-height:20px;color:#f0f0f0;-webkit-text-stroke:0.35px currentColor;">0</div>
<div class="t" style="right:414px;top:655.0px;font-size:10.5px;line-height:20px;color:#9b9b9b;text-align:right;">°C</div>
<svg class="ic" style="left:419.0px;top:705.0px;width:18px;height:18px;color:#44739e;fill:#44739e;" viewBox="0 0 24 24"><path d="M7,5H21V7H7V5M7,13V11H21V13H7M4,4.5A1.5,1.5 0 0,1 5.5,6A1.5,1.5 0 0,1 4,7.5A1.5,1.5 0 0,1 2.5,6A1.5,1.5 0 0,1 4,4.5M4,10.5A1.5,1.5 0 0,1 5.5,12A1.5,1.5 0 0,1 4,13.5A1.5,1.5 0 0,1 2.5,12A1.5,1.5 0 0,1 4,10.5M7,19V17H21V19H7M4,16.5A1.5,1.5 0 0,1 5.5,18A1.5,1.5 0 0,1 4,19.5A1.5,1.5 0 0,1 2.5,18A1.5,1.5 0 0,1 4,16.5Z"/></svg>
<div class="tf" style="left:443px;top:692px;width:313px;height:42px"></div>
<div class="t" style="left:452px;top:695.7px;font-size:8px;line-height:20px;color:#9b9b9b;">Maintenance scheduled</div>
<div class="t" style="left:452px;top:707.8px;font-size:11px;line-height:20px;color:#f0f0f0;">manual</div>
<div class="arrow" style="left:734px;top:711px"></div>
<svg class="ic" style="left:419.0px;top:752.8px;width:18px;height:18px;color:#44739e;fill:#44739e;" viewBox="0 0 24 24"><path d="M2 11H9.17C9.58 9.83 10.69 9 12 9S14.42 9.83 14.83 11H22V13H14.83C14.42 14.17 13.31 15 12 15S9.58 14.17 9.17 13H2V11Z"/></svg>
<div class="t" style="left:455px;top:750.8px;font-size:10.5px;line-height:20px;color:#f0f0f0;">Pump delay</div>
<div class="tf" style="left:662px;top:740px;width:93px;height:42px"></div>
<div class="t" style="left:674px;top:751.0px;font-size:11px;line-height:20px;color:#f0f0f0;-webkit-text-stroke:0.35px currentColor;">1</div>
<div class="t" style="right:414px;top:751.0px;font-size:10.5px;line-height:20px;color:#9b9b9b;text-align:right;">min</div>
<svg class="ic" style="left:419.0px;top:800.8px;width:18px;height:18px;color:#44739e;fill:#44739e;" viewBox="0 0 24 24"><g fill="none" stroke="currentColor" stroke-linecap="round"><path d="M11.25,2.7V15.5" stroke-width="3.1"/><path d="M12.8,3.5H17.2M12.8,8H17.2M12.8,12.6H17.2" stroke-width="1.7" stroke-linecap="butt"/><path d="M0.9,15.7Q3.8,19.6 6.8,15.7M16.6,15.7Q19.6,19.6 22.8,15.7" stroke-width="1.9"/><path d="M2.2,22Q4.2,20 6.2,22T10.2,22T14.2,22T18.2,22T22.2,22" stroke-width="1.9"/></g><circle cx="11.25" cy="16.3" r="2.2"/></svg>
<div class="t" style="left:455px;top:798.8px;font-size:10.5px;line-height:20px;color:#f0f0f0;">Selected flow temperature</div>
<div class="tf" style="left:669px;top:788px;width:86px;height:42px"></div>
<div class="t" style="left:681px;top:799.0px;font-size:11px;line-height:20px;color:#f0f0f0;-webkit-text-stroke:0.35px currentColor;">65</div>
<div class="t" style="right:414px;top:799.0px;font-size:10.5px;line-height:20px;color:#9b9b9b;text-align:right;">°C</div>
<svg class="ic" style="left:419.0px;top:848.8px;width:18px;height:18px;color:#44739e;fill:#44739e;" viewBox="0 0 24 24"><path d="M2 11H9.17C9.58 9.83 10.69 9 12 9S14.42 9.83 14.83 11H22V13H14.83C14.42 14.17 13.31 15 12 15S9.58 14.17 9.17 13H2V11Z"/></svg>
<div class="t" style="left:455px;top:846.8px;font-size:10.5px;line-height:20px;color:#f0f0f0;">Time to next maintenance</div>
<div class="tf" style="left:664px;top:836px;width:91px;height:42px"></div>
<div class="t" style="left:676px;top:847.0px;font-size:11px;line-height:20px;color:#f0f0f0;-webkit-text-stroke:0.35px currentColor;">6000</div>
<div class="t" style="right:414px;top:847.0px;font-size:10.5px;line-height:20px;color:#9b9b9b;text-align:right;">h</div>
<svg class="ic" style="left:419.0px;top:890.8px;width:18px;height:18px;color:#44739e;fill:#44739e;" viewBox="0 0 24 24"><path fill-rule="evenodd" d="M7.5,1.5H16.5A2.5,2.5 0 0 1 19,4V20.5A2.5,2.5 0 0 1 16.5,23H7.5A2.5,2.5 0 0 1 5,20.5V4A2.5,2.5 0 0 1 7.5,1.5ZM8.3,4.5V7.5H15.8V4.5Z"/></svg>
<div class="t" style="left:455px;top:888.8px;font-size:10.5px;line-height:20px;color:#f0f0f0;">dhw Activated</div>
<div class="trk" style="left:725px;top:893.8px;background:#10688f"></div><div class="knob" style="left:737px;top:891.8px;background:#03a9f4"></div>
<svg class="ic" style="left:419.0px;top:926.8px;width:18px;height:18px;color:#44739e;fill:#44739e;" viewBox="0 0 24 24"><path fill-rule="evenodd" d="M7.5,1.5H16.5A2.5,2.5 0 0 1 19,4V20.5A2.5,2.5 0 0 1 16.5,23H7.5A2.5,2.5 0 0 1 5,20.5V4A2.5,2.5 0 0 1 7.5,1.5ZM8.3,4.5V7.5H15.8V4.5Z"/></svg>
<div class="t" style="left:455px;top:924.8px;font-size:10.5px;line-height:20px;color:#f0f0f0;">dhw Circulation active</div>
<div class="trk" style="left:725px;top:929.8px;background:#4b4b4b"></div><div class="knob" style="left:725px;top:927.8px;background:#a2a2a2"></div>
<svg class="ic" style="left:419.0px;top:962.8px;width:18px;height:18px;color:#44739e;fill:#44739e;" viewBox="0 0 24 24"><path fill-rule="evenodd" d="M7.5,1.5H16.5A2.5,2.5 0 0 1 19,4V20.5A2.5,2.5 0 0 1 16.5,23H7.5A2.5,2.5 0 0 1 5,20.5V4A2.5,2.5 0 0 1 7.5,1.5ZM8.3,4.5V7.5H15.8V4.5Z"/></svg>
<div class="t" style="left:455px;top:960.8px;font-size:10.5px;line-height:20px;color:#f0f0f0;">dhw Circulation pump available</div>
<div class="trk" style="left:725px;top:965.8px;background:#4b4b4b"></div><div class="knob" style="left:725px;top:963.8px;background:#a2a2a2"></div>
<svg class="ic" style="left:419.0px;top:1005.0px;width:18px;height:18px;color:#44739e;fill:#44739e;" viewBox="0 0 24 24"><path d="M7,5H21V7H7V5M7,13V11H21V13H7M4,4.5A1.5,1.5 0 0,1 5.5,6A1.5,1.5 0 0,1 4,7.5A1.5,1.5 0 0,1 2.5,6A1.5,1.5 0 0,1 4,4.5M4,10.5A1.5,1.5 0 0,1 5.5,12A1.5,1.5 0 0,1 4,13.5A1.5,1.5 0 0,1 2.5,12A1.5,1.5 0 0,1 4,10.5M7,19V17H21V19H7M4,16.5A1.5,1.5 0 0,1 5.5,18A1.5,1.5 0 0,1 4,19.5A1.5,1.5 0 0,1 2.5,18A1.5,1.5 0 0,1 4,16.5Z"/></svg>
<div class="tf" style="left:443px;top:992px;width:313px;height:42px"></div>
<div class="t" style="left:452px;top:995.7px;font-size:8px;line-height:20px;color:#9b9b9b;">dhw Comfort</div>
<div class="t" style="left:452px;top:1007.8px;font-size:11px;line-height:20px;color:#f0f0f0;">hot</div>
<div class="arrow" style="left:734px;top:1011px"></div>
<svg class="ic" style="left:419.0px;top:1046.8px;width:18px;height:18px;color:#44739e;fill:#44739e;" viewBox="0 0 24 24"><path fill-rule="evenodd" d="M7.5,1.5H16.5A2.5,2.5 0 0 1 19,4V20.5A2.5,2.5 0 0 1 16.5,23H7.5A2.5,2.5 0 0 1 5,20.5V4A2.5,2.5 0 0 1 7.5,1.5ZM8.3,4.5V7.5H15.8V4.5Z"/></svg>
<div class="t" style="left:455px;top:1044.8px;font-size:10.5px;line-height:20px;color:#f0f0f0;">dhw Disinfecting</div>
<div class="trk" style="left:725px;top:1049.8px;background:#4b4b4b"></div><div class="knob" style="left:725px;top:1047.8px;background:#a2a2a2"></div>
<svg class="ic" style="left:419.0px;top:1088.8px;width:18px;height:18px;color:#44739e;fill:#44739e;" viewBox="0 0 24 24"><g fill="none" stroke="currentColor" stroke-linecap="round"><path d="M11.25,2.7V15.5" stroke-width="3.1"/><path d="M12.8,3.5H17.2M12.8,8H17.2M12.8,12.6H17.2" stroke-width="1.7" stroke-linecap="butt"/><path d="M0.9,15.7Q3.8,19.6 6.8,15.7M16.6,15.7Q19.6,19.6 22.8,15.7" stroke-width="1.9"/><path d="M2.2,22Q4.2,20 6.2,22T10.2,22T14.2,22T18.2,22T22.2,22" stroke-width="1.9"/></g><circle cx="11.25" cy="16.3" r="2.2"/></svg>
<div class="t" style="left:455px;top:1086.8px;font-size:10.5px;line-height:20px;color:#f0f0f0;">dhw Disinfection temperature</div>
<div class="tf" style="left:669px;top:1076px;width:86px;height:42px"></div>
<div class="t" style="left:681px;top:1087.0px;font-size:11px;line-height:20px;color:#f0f0f0;-webkit-text-stroke:0.35px currentColor;">70</div>
<div class="t" style="right:414px;top:1087.0px;font-size:10.5px;line-height:20px;color:#9b9b9b;text-align:right;">°C</div>
<svg class="ic" style="left:419.0px;top:1136.8px;width:18px;height:18px;color:#44739e;fill:#44739e;" viewBox="0 0 24 24"><g fill="none" stroke="currentColor" stroke-linecap="round"><path d="M11.25,2.7V15.5" stroke-width="3.1"/><path d="M12.8,3.5H17.2M12.8,8H17.2M12.8,12.6H17.2" stroke-width="1.7" stroke-linecap="butt"/><path d="M0.9,15.7Q3.8,19.6 6.8,15.7M16.6,15.7Q19.6,19.6 22.8,15.7" stroke-width="1.9"/><path d="M2.2,22Q4.2,20 6.2,22T10.2,22T14.2,22T18.2,22T22.2,22" stroke-width="1.9"/></g><circle cx="11.25" cy="16.3" r="2.2"/></svg>
<div class="t" style="left:455px;top:1134.8px;font-size:10.5px;line-height:20px;color:#f0f0f0;">dhw Flow temperature offset</div>
<div class="tf" style="left:669px;top:1124px;width:86px;height:42px"></div>
<div class="t" style="left:681px;top:1135.0px;font-size:11px;line-height:20px;color:#f0f0f0;-webkit-text-stroke:0.35px currentColor;">40</div>
<div class="t" style="right:414px;top:1135.0px;font-size:10.5px;line-height:20px;color:#9b9b9b;text-align:right;">°C</div>
<div class="card" style="left:775px;top:76px;width:369px;height:395px"></div>
<div class="t" style="left:788px;top:91.6px;font-size:18px;line-height:24px;color:#f0f0f0;"><span style="letter-spacing:-1.1px">EMS-ESP</span><span style="letter-spacing:-0.2px"> Thermostat</span></div>
<svg class="ic" style="left:794.0px;top:140.8px;width:18px;height:18px;color:#44739e;fill:#44739e;" viewBox="0 0 24 24"><g fill="none" stroke="currentColor" stroke-linecap="round"><path d="M11.25,2.7V15.5" stroke-width="3.1"/><path d="M12.8,3.5H17.2M12.8,8H17.2M12.8,12.6H17.2" stroke-width="1.7" stroke-linecap="butt"/><path d="M0.9,15.7Q3.8,19.6 6.8,15.7M16.6,15.7Q19.6,19.6 22.8,15.7" stroke-width="1.9"/><path d="M2.2,22Q4.2,20 6.2,22T10.2,22T14.2,22T18.2,22T22.2,22" stroke-width="1.9"/></g><circle cx="11.25" cy="16.3" r="2.2"/></svg>
<div class="t" style="left:830px;top:138.8px;font-size:10.5px;line-height:20px;color:#f0f0f0;">hc1 How hot lounge should...</div>
<div class="tf" style="left:1039px;top:128px;width:91px;height:42px"></div>
<div class="t" style="left:1051px;top:139.0px;font-size:11px;line-height:20px;color:#f0f0f0;-webkit-text-stroke:0.35px currentColor;">20,5</div>
<div class="t" style="right:39px;top:139.0px;font-size:10.5px;line-height:20px;color:#9b9b9b;text-align:right;">°C</div>
<svg class="ic" style="left:794.0px;top:188.8px;width:18px;height:18px;color:#44739e;fill:#44739e;" viewBox="0 0 24 24"><g fill="none" stroke="currentColor" stroke-linecap="round"><path d="M11.25,2.7V15.5" stroke-width="3.1"/><path d="M12.8,3.5H17.2M12.8,8H17.2M12.8,12.6H17.2" stroke-width="1.7" stroke-linecap="butt"/><path d="M0.9,15.7Q3.8,19.6 6.8,15.7M16.6,15.7Q19.6,19.6 22.8,15.7" stroke-width="1.9"/><path d="M2.2,22Q4.2,20 6.2,22T10.2,22T14.2,22T18.2,22T22.2,22" stroke-width="1.9"/></g><circle cx="11.25" cy="16.3" r="2.2"/></svg>
<div class="t" style="left:830px;top:186.8px;font-size:10.5px;line-height:20px;color:#f0f0f0;">hc1 Day temperature T2</div>
<div class="tf" style="left:1034px;top:176px;width:96px;height:42px"></div>
<div class="t" style="left:1046px;top:187.0px;font-size:11px;line-height:20px;color:#f0f0f0;-webkit-text-stroke:0.35px currentColor;">20,5</div>
<div class="t" style="right:39px;top:187.0px;font-size:10.5px;line-height:20px;color:#9b9b9b;text-align:right;">°C</div>
<svg class="ic" style="left:794.0px;top:236.8px;width:18px;height:18px;color:#44739e;fill:#44739e;" viewBox="0 0 24 24"><g fill="none" stroke="currentColor" stroke-linecap="round"><path d="M11.25,2.7V15.5" stroke-width="3.1"/><path d="M12.8,3.5H17.2M12.8,8H17.2M12.8,12.6H17.2" stroke-width="1.7" stroke-linecap="butt"/><path d="M0.9,15.7Q3.8,19.6 6.8,15.7M16.6,15.7Q19.6,19.6 22.8,15.7" stroke-width="1.9"/><path d="M2.2,22Q4.2,20 6.2,22T10.2,22T14.2,22T18.2,22T22.2,22" stroke-width="1.9"/></g><circle cx="11.25" cy="16.3" r="2.2"/></svg>
<div class="t" style="left:830px;top:234.8px;font-size:10.5px;line-height:20px;color:#f0f0f0;">hc1 Day temperature T3</div>
<div class="tf" style="left:1034px;top:224px;width:96px;height:42px"></div>
<div class="t" style="left:1046px;top:235.0px;font-size:11px;line-height:20px;color:#f0f0f0;-webkit-text-stroke:0.35px currentColor;">21,0</div>
<div class="t" style="right:39px;top:235.0px;font-size:10.5px;line-height:20px;color:#9b9b9b;text-align:right;">°C</div>
<svg class="ic" style="left:794.0px;top:284.8px;width:18px;height:18px;color:#44739e;fill:#44739e;" viewBox="0 0 24 24"><g fill="none" stroke="currentColor" stroke-linecap="round"><path d="M11.25,2.7V15.5" stroke-width="3.1"/><path d="M12.8,3.5H17.2M12.8,8H17.2M12.8,12.6H17.2" stroke-width="1.7" stroke-linecap="butt"/><path d="M0.9,15.7Q3.8,19.6 6.8,15.7M16.6,15.7Q19.6,19.6 22.8,15.7" stroke-width="1.9"/><path d="M2.2,22Q4.2,20 6.2,22T10.2,22T14.2,22T18.2,22T22.2,22" stroke-width="1.9"/></g><circle cx="11.25" cy="16.3" r="2.2"/></svg>
<div class="t" style="left:830px;top:282.8px;font-size:10.5px;line-height:20px;color:#f0f0f0;">hc1 Day temperature T4</div>
<div class="tf" style="left:1034px;top:272px;width:96px;height:42px"></div>
<div class="t" style="left:1046px;top:283.0px;font-size:11px;line-height:20px;color:#f0f0f0;-webkit-text-stroke:0.35px currentColor;">20,5</div>
<div class="t" style="right:39px;top:283.0px;font-size:10.5px;line-height:20px;color:#9b9b9b;text-align:right;">°C</div>
<svg class="ic" style="left:794.0px;top:332.8px;width:18px;height:18px;color:#44739e;fill:#44739e;" viewBox="0 0 24 24"><g fill="none" stroke="currentColor" stroke-linecap="round"><path d="M11.25,2.7V15.5" stroke-width="3.1"/><path d="M12.8,3.5H17.2M12.8,8H17.2M12.8,12.6H17.2" stroke-width="1.7" stroke-linecap="butt"/><path d="M0.9,15.7Q3.8,19.6 6.8,15.7M16.6,15.7Q19.6,19.6 22.8,15.7" stroke-width="1.9"/><path d="M2.2,22Q4.2,20 6.2,22T10.2,22T14.2,22T18.2,22T22.2,22" stroke-width="1.9"/></g><circle cx="11.25" cy="16.3" r="2.2"/></svg>
<div class="t" style="left:830px;top:330.8px;font-size:10.5px;line-height:20px;color:#f0f0f0;">hc1 Manual temperature</div>
<div class="tf" style="left:1034px;top:320px;width:96px;height:42px"></div>
<div class="t" style="left:1046px;top:331.0px;font-size:11px;line-height:20px;color:#f0f0f0;-webkit-text-stroke:0.35px currentColor;">22,0</div>
<div class="t" style="right:39px;top:331.0px;font-size:10.5px;line-height:20px;color:#9b9b9b;text-align:right;">°C</div>
<svg class="ic" style="left:794.0px;top:381.0px;width:18px;height:18px;color:#44739e;fill:#44739e;" viewBox="0 0 24 24"><path d="M7,5H21V7H7V5M7,13V11H21V13H7M4,4.5A1.5,1.5 0 0,1 5.5,6A1.5,1.5 0 0,1 4,7.5A1.5,1.5 0 0,1 2.5,6A1.5,1.5 0 0,1 4,4.5M4,10.5A1.5,1.5 0 0,1 5.5,12A1.5,1.5 0 0,1 4,13.5A1.5,1.5 0 0,1 2.5,12A1.5,1.5 0 0,1 4,10.5M7,19V17H21V19H7M4,16.5A1.5,1.5 0 0,1 5.5,18A1.5,1.5 0 0,1 4,19.5A1.5,1.5 0 0,1 2.5,18A1.5,1.5 0 0,1 4,16.5Z"/></svg>
<div class="tf" style="left:818px;top:368px;width:313px;height:42px"></div>
<div class="t" style="left:827px;top:371.7px;font-size:8px;line-height:20px;color:#9b9b9b;">hc1 Mode</div>
<div class="t" style="left:827px;top:383.8px;font-size:11px;line-height:20px;color:#f0f0f0;">auto</div>
<div class="arrow" style="left:1109px;top:387px"></div>
<svg class="ic" style="left:794.0px;top:428.8px;width:18px;height:18px;color:#44739e;fill:#44739e;" viewBox="0 0 24 24"><g fill="none" stroke="currentColor" stroke-linecap="round"><path d="M11.25,2.7V15.5" stroke-width="3.1"/><path d="M12.8,3.5H17.2M12.8,8H17.2M12.8,12.6H17.2" stroke-width="1.7" stroke-linecap="butt"/><path d="M0.9,15.7Q3.8,19.6 6.8,15.7M16.6,15.7Q19.6,19.6 22.8,15.7" stroke-width="1.9"/><path d="M2.2,22Q4.2,20 6.2,22T10.2,22T14.2,22T18.2,22T22.2,22" stroke-width="1.9"/></g><circle cx="11.25" cy="16.3" r="2.2"/></svg>
<div class="t" style="left:830px;top:426.8px;font-size:10.5px;line-height:20px;color:#f0f0f0;">hc1 Night temperature T1</div>
<div class="tf" style="left:1034px;top:416px;width:96px;height:42px"></div>
<div class="t" style="left:1046px;top:427.0px;font-size:11px;line-height:20px;color:#f0f0f0;-webkit-text-stroke:0.35px currentColor;">15,0</div>
<div class="t" style="right:39px;top:427.0px;font-size:10.5px;line-height:20px;color:#9b9b9b;text-align:right;">°C</div>
<div class="card" style="left:775px;top:477px;width:369px;height:241px"></div>
<svg style="position:absolute;left:0;top:0;width:1157px;height:1169px;overflow:visible" viewBox="0 0 1157 1169"><path d="M899.07,647.67 A87.5,87.5 0 0 1 1005.67,510.00" fill="none" stroke="#4caf50" stroke-width="2.6"/><path d="M1005.67,510.00 A87.5,87.5 0 0 1 1019.53,647.67" fill="none" stroke="#d6d6d6" stroke-width="2"/><circle cx="1005.67" cy="510.00" r="4.7" fill="#4caf50"/></svg>
<div class="t" style="left:805px;width:300px;top:536.0px;font-size:52px;line-height:60px;color:#e4e4e4;text-align:center;">20.4</div>
<div class="t" style="left:1005.5px;top:542.2px;font-size:16.5px;line-height:20px;color:#f0f0f0;letter-spacing:-0.8px;">°C</div>
<div class="t" style="left:809.4px;width:300px;top:601.5px;font-size:15px;line-height:18px;color:#f0f0f0;text-align:center;">20.5</div>
<div class="t" style="left:809px;width:300px;top:620.5px;font-size:12px;line-height:16px;color:#9b9b9b;text-align:center;">Auto</div>
<svg class="ic" style="left:911.3px;top:662.3px;width:18px;height:18px;color:#4caf50;fill:#4caf50;" viewBox="0 0 24 24"><path fill-rule="evenodd" d="M5,3H19A2,2 0 0 1 21,5V19.5A2,2 0 0 1 19,21.8H5A2,2 0 0 1 2.8,19.5V5A2,2 0 0 1 5,3ZM5.3,9.5V19.3H17.7V9.5Z"/><path d="M5.6,1.6H7.8V4H5.6ZM15.6,1.6H17.8V4H15.6Z"/><circle cx="17.8" cy="17.6" r="5.3" fill="#1c1c1c"/><circle cx="17.8" cy="17.6" r="3.2" fill="none" stroke="currentColor" stroke-width="1.9"/></svg>
<svg class="ic" style="left:949.9px;top:663.0px;width:18px;height:18px;color:#8a8a8a;fill:#8a8a8a;" viewBox="0 0 24 24"><path d="M17.66 11.2C17.43 10.9 17.15 10.64 16.89 10.38C16.22 9.78 15.46 9.35 14.82 8.72C13.33 7.26 13 4.85 13.95 3C13 3.23 12.17 3.75 11.46 4.32C8.87 6.4 7.85 10.07 9.07 13.22C9.11 13.32 9.15 13.42 9.15 13.55C9.15 13.77 9 13.970 8.8 14.05C8.57 14.15 8.33 14.09 8.14 13.93C8.08 13.88 8.04 13.83 8 13.76C6.87 12.33 6.69 10.28 7.45 8.64C5.78 10 4.87 12.3 5 14.47C5.06 14.97 5.12 15.47 5.29 15.97C5.43 16.57 5.7 17.17 6 17.7C7.08 19.43 8.95 20.67 10.96 20.92C13.1 21.19 15.39 20.8 17.030 19.32C18.86 17.66 19.5 15 18.56 12.72L18.43 12.46C18.22 12 17.66 11.2 17.66 11.2M14.5 17.5C14.22 17.74 13.76 18 13.4 18.1C12.28 18.5 11.16 17.94 10.5 17.28C11.69 17 12.4 16.12 12.61 15.23C12.78 14.43 12.46 13.77 12.33 13C12.21 12.26 12.23 11.63 12.5 10.94C12.69 11.32 12.89 11.7 13.13 12C13.9 13 15.11 13.44 15.37 14.8C15.41 14.94 15.43 15.08 15.43 15.23C15.46 16.05 15.1 16.95 14.5 17.5H14.5Z"/></svg>
<svg class="ic" style="left:989.0px;top:662.8px;width:18px;height:18px;color:#8a8a8a;fill:#8a8a8a;" viewBox="0 0 24 24"><path d="M16.56,5.44L15.11,6.89C16.84,7.94 18,9.83 18,12A6,6 0 0,1 12,18A6,6 0 0,1 6,12C6,9.83 7.16,7.94 8.88,6.88L7.44,5.44C5.36,6.88 4,9.28 4,12A8,8 0 0,0 12,20A8,8 0 0,0 20,12C20,9.28 18.64,6.88 16.56,5.44M13,3H11V13H13"/></svg>
<div class="t" style="left:808.6px;width:300px;top:689.5px;font-size:12px;line-height:16px;color:#f0f0f0;text-align:center;-webkit-text-stroke:0.25px currentColor;">Hc1</div>
<div class="dot" style="left:1123.4px;top:490.0px"></div>
<div class="dot" style="left:1123.4px;top:494.5px"></div>
<div class="dot" style="left:1123.4px;top:499.1px"></div>
<div class="card" style="left:775px;top:724px;width:369px;height:167px"></div>
<div class="t" style="left:788px;top:740.4px;font-size:18px;line-height:24px;color:#f0f0f0;"><span style="letter-spacing:-1.1px">EMS-ESP</span><span style="letter-spacing:-0.2px"> Thermostat</span></div>
<svg class="ic" style="left:794.0px;top:782.0px;width:18px;height:18px;color:#44739e;fill:#44739e;" viewBox="0 0 24 24"><path d="M12,9A3,3 0 0,0 9,12A3,3 0 0,0 12,15A3,3 0 0,0 15,12A3,3 0 0,0 12,9M12,17A5,5 0 0,1 7,12A5,5 0 0,1 12,7A5,5 0 0,1 17,12A5,5 0 0,1 12,17M12,4.5C7,4.5 2.73,7.61 1,12C2.73,16.39 7,19.5 12,19.5C17,19.5 21.27,16.39 23,12C21.27,7.61 17,4.5 12,4.5Z"/></svg>
<div class="t" style="left:830px;top:781.0px;font-size:10.5px;line-height:20px;color:#f0f0f0;">Date/time</div>
<div class="t" style="right:26px;top:781.0px;font-size:10.5px;line-height:20px;color:#f0f0f0;text-align:right;">06.02.2023 21:18</div>
<svg class="ic" style="left:794.0px;top:818.0px;width:18px;height:18px;color:#44739e;fill:#44739e;" viewBox="0 0 24 24"><path fill-rule="evenodd" d="M15 13V5A3 3 0 0 0 9 5V13A5 5 0 1 0 15 13M12 4A1 1 0 0 1 13 5V8H11V5A1 1 0 0 1 12 4Z"/></svg>
<div class="t" style="left:830px;top:817.0px;font-size:10.5px;line-height:20px;color:#f0f0f0;">hc1 Current room temp</div>
<div class="t" style="right:26px;top:817.0px;font-size:10.5px;line-height:20px;color:#f0f0f0;text-align:right;">20.4 °C</div>
<svg class="ic" style="left:794.0px;top:854.0px;width:18px;height:18px;color:#44739e;fill:#44739e;" viewBox="0 0 24 24"><path d="M12,9A3,3 0 0,0 9,12A3,3 0 0,0 12,15A3,3 0 0,0 15,12A3,3 0 0,0 12,9M12,17A5,5 0 0,1 7,12A5,5 0 0,1 12,7A5,5 0 0,1 17,12A5,5 0 0,1 12,17M12,4.5C7,4.5 2.73,7.61 1,12C2.73,16.39 7,19.5 12,19.5C17,19.5 21.27,16.39 23,12C21.27,7.61 17,4.5 12,4.5Z"/></svg>
<div class="t" style="left:830px;top:853.0px;font-size:10.5px;line-height:20px;color:#f0f0f0;">hc1 Program switchtime</div>
<div class="t" style="right:26px;top:853.0px;font-size:10.5px;line-height:20px;color:#f0f0f0;text-align:right;">00 mo 00:00 T1</div>
</body></html>
